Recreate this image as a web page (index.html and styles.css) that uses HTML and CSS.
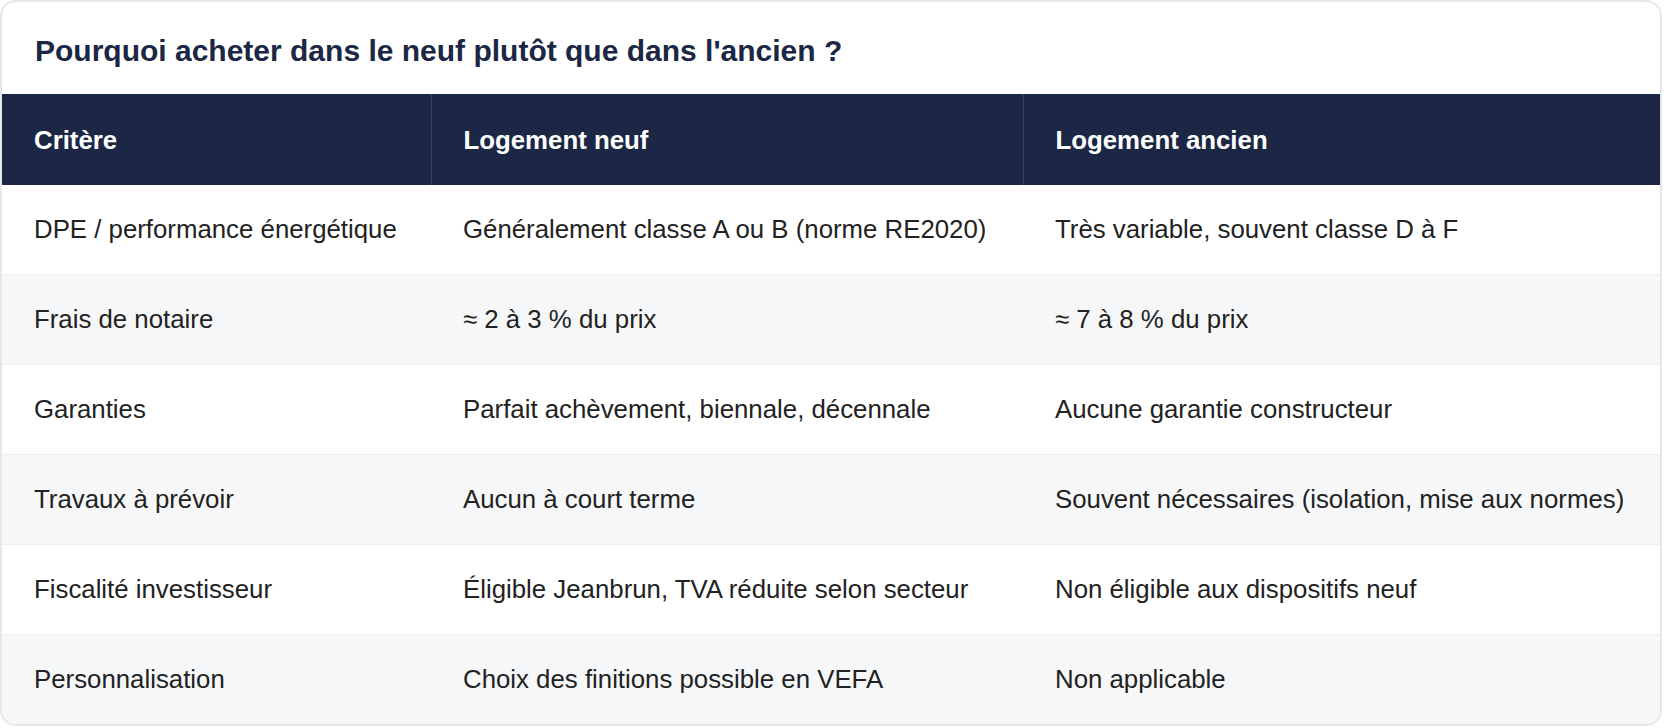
FILE: index.html
```html
<!DOCTYPE html>
<html lang="fr">
<head>
<meta charset="utf-8">
<title>Neuf ou ancien</title>
<link rel="stylesheet" href="styles.css">
</head>
<body>
<section class="card">
  <h2 class="card-title">Pourquoi acheter dans le neuf plutôt que dans l'ancien ?</h2>
  <table class="compare">
    <colgroup>
      <col class="col-crit">
      <col class="col-neuf">
      <col class="col-ancien">
    </colgroup>
    <thead>
      <tr>
        <th>Critère</th>
        <th>Logement neuf</th>
        <th>Logement ancien</th>
      </tr>
    </thead>
    <tbody>
      <tr>
        <td>DPE / performance énergétique</td>
        <td>Généralement classe A ou B (norme RE2020)</td>
        <td>Très variable, souvent classe D à F</td>
      </tr>
      <tr>
        <td>Frais de notaire</td>
        <td>≈ 2 à 3 % du prix</td>
        <td>≈ 7 à 8 % du prix</td>
      </tr>
      <tr>
        <td>Garanties</td>
        <td>Parfait achèvement, biennale, décennale</td>
        <td>Aucune garantie constructeur</td>
      </tr>
      <tr>
        <td>Travaux à prévoir</td>
        <td>Aucun à court terme</td>
        <td>Souvent nécessaires (isolation, mise aux normes)</td>
      </tr>
      <tr>
        <td>Fiscalité investisseur</td>
        <td>Éligible Jeanbrun, TVA réduite selon secteur</td>
        <td>Non éligible aux dispositifs neuf</td>
      </tr>
      <tr>
        <td>Personnalisation</td>
        <td>Choix des finitions possible en VEFA</td>
        <td>Non applicable</td>
      </tr>
    </tbody>
  </table>
</section>
</body>
</html>
```
FILE: styles.css
```css
* { box-sizing: border-box; }
html, body { margin: 0; padding: 0; background: #ffffff; }
body {
  font-family: "Liberation Sans", Arial, Helvetica, sans-serif;
  color: #222222;
}
.card {
  width: 1662px;
  border: 2px solid #e5e7eb;
  border-radius: 16px;
  overflow: hidden;
  background: #ffffff;
}
.card-title {
  margin: 0;
  padding: 32px 33px 26px;
  font-size: 30px;
  line-height: 34px;
  font-weight: 700;
  color: #1b2744;
}
.compare {
  width: 100%;
  border-collapse: collapse;
  table-layout: fixed;
  font-size: 25.8px;
}
.col-crit { width: 429px; }
.col-neuf { width: 592px; }
.col-ancien { width: auto; }
.compare th {
  background: #1b2744;
  color: #ffffff;
  font-weight: 700;
  text-align: left;
  padding: 30px 32px 29px;
  line-height: 32px;
  border-left: 1px solid #3a4560;
}
.compare th:first-child { border-left: none; }
.compare td {
  padding: 29px 32px;
  line-height: 31px;
  border-bottom: 1px solid #eceef2;
  white-space: nowrap;
}
.compare tbody tr:nth-child(even) td { background: #f6f7f9; }
.compare tbody tr:last-child td { border-bottom: none; }
```
